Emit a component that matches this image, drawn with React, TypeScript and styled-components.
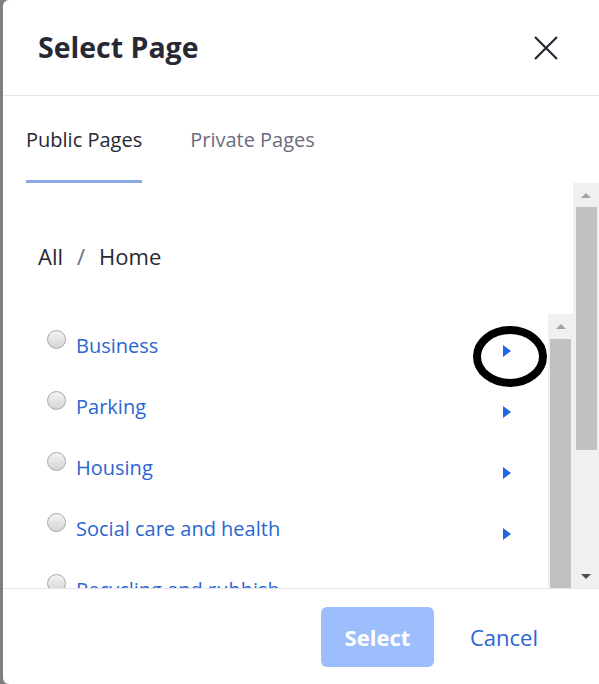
import React from "react";
import styled, { createGlobalStyle } from "styled-components";

const Global = createGlobalStyle`
  html, body { margin: 0; padding: 0; }
  body { background: #fff; font-family: "Open Sans", "Noto Sans", sans-serif; }
  * { box-sizing: border-box; }
`;

const Page = styled.div`
  position: relative;
  width: 599px;
  height: 684px;
  display: flex;
  background: #808080;
  overflow: hidden;
`;

const Modal = styled.div`
  margin-left: 3px;
  flex: 1;
  display: flex;
  flex-direction: column;
  background: #fff;
  border-radius: 6px 0 0 6px;
  overflow: hidden;
`;

const Header = styled.header`
  height: 96px;
  flex: none;
  display: flex;
  align-items: center;
  justify-content: space-between;
  padding: 0 41px 0 35px;
  border-bottom: 1px solid #e4e4ea;
`;

const Title = styled.h1`
  margin: 0;
  font-size: 28.5px;
  line-height: 1;
  font-weight: 700;
  color: #272833;
`;

const CloseButton = styled.button`
  width: 24px;
  height: 24px;
  padding: 0;
  border: 0;
  background: none;
  display: flex;
  color: #272833;
`;

const Tabs = styled.nav`
  height: 87px;
  flex: none;
  display: flex;
  gap: 48px;
  padding-left: 23px;
`;

const Tab = styled.div<{ $active?: boolean }>`
  display: flex;
  align-items: center;
  padding-top: 3px;
  font-size: 20px;
  color: ${(p) => (p.$active ? "#272833" : "#6b6c7e")};
  border-bottom: 3px solid ${(p) => (p.$active ? "#8aa8e2" : "transparent")};
`;

const Body = styled.div`
  flex: 1;
  display: flex;
  min-height: 0;
  overflow: hidden;
`;

const Content = styled.div`
  flex: 1;
  display: flex;
  flex-direction: column;
  overflow: hidden;
`;

const Breadcrumb = styled.div`
  margin-top: 58px;
  padding-left: 35px;
  display: flex;
  gap: 14px;
  font-size: 22px;
  line-height: 30px;
  color: #272833;
`;

const Sep = styled.span`
  color: #6b6c7e;
`;

const InnerList = styled.div`
  margin-top: 43px;
  height: 300px;
  flex: none;
  display: flex;
`;

const Rows = styled.ul`
  flex: 1;
  margin: 0;
  padding: 0;
  list-style: none;
`;

const Row = styled.li`
  height: 61px;
  display: flex;
  align-items: flex-start;
  padding: 0 37px 0 44px;
`;

const Radio = styled.span`
  width: 19px;
  height: 19px;
  margin-top: 16px;
  flex: none;
  border-radius: 50%;
  border: 1px solid #a9a9a9;
  background: linear-gradient(#f4f4f4, #d4d4d4);
`;

const Label = styled.span`
  margin: 18px 0 0 10px;
  font-size: 20px;
  line-height: 28px;
  color: #2a66d2;
`;

const Caret = styled.span`
  margin: 31px 0 0 auto;
  width: 0;
  height: 0;
  border-top: 6px solid transparent;
  border-bottom: 6px solid transparent;
  border-left: 8px solid #1d68e4;
`;

const Track = styled.div<{ $w: number }>`
  width: ${(p) => p.$w}px;
  flex: none;
  display: flex;
  flex-direction: column;
  background: #f0f0f0;
`;

const ArrowBox = styled.div<{ $h: number }>`
  height: ${(p) => p.$h}px;
  flex: none;
  display: flex;
  align-items: center;
  justify-content: center;
`;

const Arrow = styled.span<{ $down?: boolean }>`
  width: 0;
  height: 0;
  border-left: 5px solid transparent;
  border-right: 5px solid transparent;
  ${(p) =>
    p.$down
      ? "border-top: 5px solid #4d4d4d;"
      : "border-bottom: 5px solid #a3a3a3;"}
`;

const Thumb = styled.div<{ $h?: number; $ml: number; $mr: number }>`
  ${(p) => (p.$h ? `height: ${p.$h}px; flex: none;` : "flex: 1;")}
  margin: 0 ${(p) => p.$mr}px 0 ${(p) => p.$ml}px;
  background: #c1c1c1;
`;

const Spacer = styled.div`
  flex: 1;
`;

const Footer = styled.footer`
  height: 96px;
  flex: none;
  display: flex;
  align-items: center;
  justify-content: flex-end;
  gap: 36px;
  padding: 1px 61px 0 0;
  border-top: 1px solid #e4e4ea;
`;

const PrimaryButton = styled.button`
  width: 113px;
  height: 60px;
  border: 0;
  border-radius: 6px;
  background: #9dbefc;
  color: #ffffff;
  font-family: inherit;
  font-size: 22px;
  font-weight: 700;
  cursor: default;
`;

const LinkButton = styled.button`
  padding: 0;
  border: 0;
  background: none;
  color: #2a66d2;
  font-family: inherit;
  font-size: 22px;
`;

const Annotation = styled.svg`
  position: absolute;
  left: 473px;
  top: 326px;
`;

const items = [
  { name: "Business", children: true },
  { name: "Parking", children: true },
  { name: "Housing", children: true },
  { name: "Social care and health", children: true },
  { name: "Recycling and rubbish", children: true },
];

export default function App() {
  return (
    <Page>
      <Global />
      <Modal>
        <Header>
          <Title>Select Page</Title>
          <CloseButton aria-label="Close">
            <svg width="24" height="24" viewBox="0 0 24 24">
              <path d="M1 1 L23 23 M23 1 L1 23" stroke="currentColor" strokeWidth="2.2" fill="none" />
            </svg>
          </CloseButton>
        </Header>
        <Tabs>
          <Tab $active>Public Pages</Tab>
          <Tab>Private Pages</Tab>
        </Tabs>
        <Body>
          <Content>
            <Breadcrumb>
              <span>All</span>
              <Sep>/</Sep>
              <span>Home</span>
            </Breadcrumb>
            <InnerList>
              <Rows>
                {items.map((it) => (
                  <Row key={it.name}>
                    <Radio />
                    <Label>{it.name}</Label>
                    {it.children && <Caret />}
                  </Row>
                ))}
              </Rows>
              <Track $w={25}>
                <ArrowBox $h={25}>
                  <Arrow />
                </ArrowBox>
                <Thumb $ml={2} $mr={2} />
              </Track>
            </InnerList>
          </Content>
          <Track $w={26}>
            <ArrowBox $h={24}>
              <Arrow />
            </ArrowBox>
            <Thumb $h={243} $ml={3} $mr={2} />
            <Spacer />
            <ArrowBox $h={24}>
              <Arrow $down />
            </ArrowBox>
          </Track>
        </Body>
        <Footer>
          <PrimaryButton>Select</PrimaryButton>
          <LinkButton>Cancel</LinkButton>
        </Footer>
      </Modal>
      <Annotation width="74" height="61" viewBox="0 0 74 61">
        <ellipse cx="37" cy="30.5" rx="33" ry="26.5" fill="none" stroke="#000" strokeWidth="8" />
      </Annotation>
    </Page>
  );
}
